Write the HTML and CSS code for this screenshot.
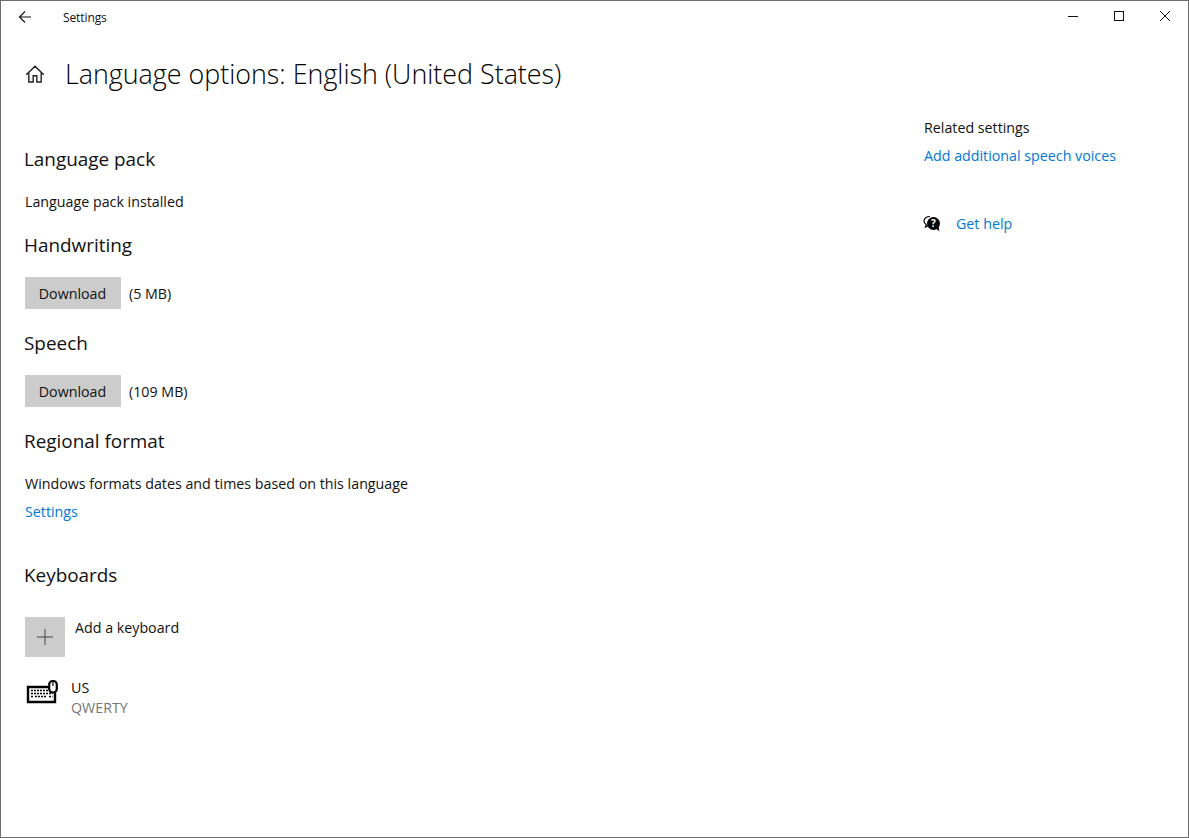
FILE: index.html
```html
<!DOCTYPE html>
<html lang="en">
<head>
<meta charset="utf-8">
<title>Settings</title>
<link rel="stylesheet" href="styles.css">
</head>
<body>
<div class="window">
  <header class="titlebar">
    <div class="titlebar-left">
      <svg class="back" width="16" height="16" viewBox="0 0 16 16"><path d="M14 8H2.500M8 2.500 2.500 8 8 13.500" fill="none" stroke="#111" stroke-width="1.100"/></svg>
      <span class="app-name">Settings</span>
    </div>
    <div class="controls">
      <svg class="ctl" width="46" height="32" viewBox="0 0 46 32"><path d="M18 17.500H28" stroke="#111" fill="none"/></svg>
      <svg class="ctl" width="46" height="32" viewBox="0 0 46 32"><rect x="18.500" y="12.500" width="9" height="9" stroke="#111" fill="none"/></svg>
      <svg class="ctl" width="46" height="32" viewBox="0 0 46 32"><path d="M18 12 28 22M28 12 18 22" stroke="#111" fill="none"/></svg>
    </div>
  </header>
  <div class="page-head">
    <svg class="home" width="20" height="20" viewBox="0 0 20 20"><path d="M1.200 10.800 10 2.200l8.800 8.600M3.800 8.500V18H8.200V11.800H11.800V18H16.200V8.500" fill="none" stroke="#222" stroke-width="1.400"/></svg>
    <h1 class="page-title">Language options: English (United States)</h1>
  </div>
  <div class="columns">
    <main class="content">
      <h2 class="heading first">Language pack</h2>
      <p class="text sub">Language pack installed</p>
      <h2 class="heading tight">Handwriting</h2>
      <div class="action"><button class="btn">Download</button><span class="text size">(5 MB)</span></div>
      <h2 class="heading">Speech</h2>
      <div class="action"><button class="btn">Download</button><span class="text size">(109 MB)</span></div>
      <h2 class="heading">Regional format</h2>
      <p class="text sub">Windows formats dates and times based on this language</p>
      <a class="text link" href="#">Settings</a>
      <h2 class="heading keyboards">Keyboards</h2>
      <div class="add-row">
        <span class="add-tile"><svg width="18" height="18" viewBox="0 0 18 18"><path d="M9 1V17M1 9H17" stroke="#444" fill="none"/></svg></span>
        <span class="text add-label">Add a keyboard</span>
      </div>
      <div class="kb-row">
        <svg class="kb-icon" width="32" height="26" viewBox="0 0 32 26"><path d="M23 8H2V23H29V14" fill="none" stroke="#000" stroke-width="2.400"/><rect x="23.200" y="2" width="7.600" height="11.500" rx="3.500" fill="#fff" stroke="#000" stroke-width="2.200"/><path d="M27 2V7" stroke="#000" stroke-width="1.200"/><path d="M5 11.500H22M5 14.500H26.500M5 17.500H7M9 17.500H21M23 17.500H26.500" stroke="#000" stroke-width="1.700" stroke-dasharray="2 1"/></svg>
        <div class="kb-text"><div class="text">US</div><div class="text muted">QWERTY</div></div>
      </div>
    </main>
    <aside class="aside">
      <div class="text">Related settings</div>
      <a class="text link" href="#">Add additional speech voices</a>
      <div class="help">
        <svg class="help-icon" width="18" height="18" viewBox="0 0 18 18"><path d="M7 1.500C3.500 1.500 1 3.500 1 6c0 1.500.8 2.800 2.200 3.600L2.500 12 5.500 10.500" fill="#fff" stroke="#000" stroke-width="1.200"/><circle cx="10.500" cy="8.500" r="6.500" fill="#000"/><path d="M13 13.500 16.500 16.500 15.500 11.500Z" fill="#000"/><text x="10.500" y="12" class="help-q">?</text></svg>
        <a class="text link" href="#">Get help</a>
      </div>
    </aside>
  </div>
</div>
</body>
</html>
```
FILE: styles.css
```css
* { box-sizing: border-box; }
html, body { margin: 0; height: 100%; }
body { font-family: "Open Sans", "Noto Sans", sans-serif; color: #111; background: #fff; }
.window { width: 1189px; height: 838px; border: 1px solid #6e6e6e; background: #fff; overflow: hidden; display: flex; flex-direction: column; }
.titlebar { height: 31px; display: flex; justify-content: space-between; align-items: flex-start; flex: none; }
.titlebar-left { display: flex; align-items: center; height: 33px; padding-left: 16px; }
.back { flex: none; margin-top: -2px; }
.app-name { font-size: 12px; margin-left: 30px; letter-spacing: -.1px; }
.controls { display: flex; }
.ctl { display: block; margin-top: -2px; }
.page-head { display: flex; align-items: center; height: 44px; margin-top: 20px; padding-left: 24px; flex: none; }
.home { flex: none; }
.page-title { font-size: 26.850px; font-weight: 300; margin: 0 0 0 20px; line-height: 44px; color: #000; }
.columns { display: flex; flex: 1; }
.content { width: 923px; padding-left: 23px; flex: none; }
.heading { font-size: 18.900px; font-weight: 400; line-height: 28px; margin: 20px 0 0; color: #111; }
.heading.first { margin-top: 49px; }
.heading.tight { margin-top: 15px; }
.heading.keyboards { margin-top: 35px; }
.text { font-size: 14.250px; line-height: 28px; color: #111; }
.sub { margin: 15px 0 0 1px; }
.link { display: block; color: #0078d4; text-decoration: none; margin-left: 1px; }
.action { display: flex; align-items: center; margin: 18px 0 0 1px; }
.btn { width: 96px; height: 32px; background: #ccc; border: 0; padding: 0 1px 0 0; font: inherit; font-size: 14.250px; color: #111; }
.size { margin-left: 8px; padding-top: 2px; }
.add-row { display: flex; align-items: flex-start; margin: 28px 0 0 1px; }
.add-tile { width: 40px; height: 40px; background: #ccc; display: flex; align-items: center; justify-content: center; }
.add-label { margin-left: 10px; line-height: 22px; }
.kb-row { display: flex; margin: 21px 0 0 2px; align-items: flex-start; }
.kb-icon { flex: none; margin-top: 1px; }
.kb-text { margin-left: 13px; }
.kb-text .text { line-height: 20px; }
.muted { color: #767676; }
.aside { padding-top: 18px; }
.aside .link { margin-left: 0; }
.help { display: flex; align-items: center; margin-top: 40px; }
.help-icon { flex: none; margin-left: -1px; margin-right: 1px; }
.help .link { margin-left: 14px; }
.help-q { font-size: 10px; font-weight: 700; fill: #fff; text-anchor: middle; }
```
